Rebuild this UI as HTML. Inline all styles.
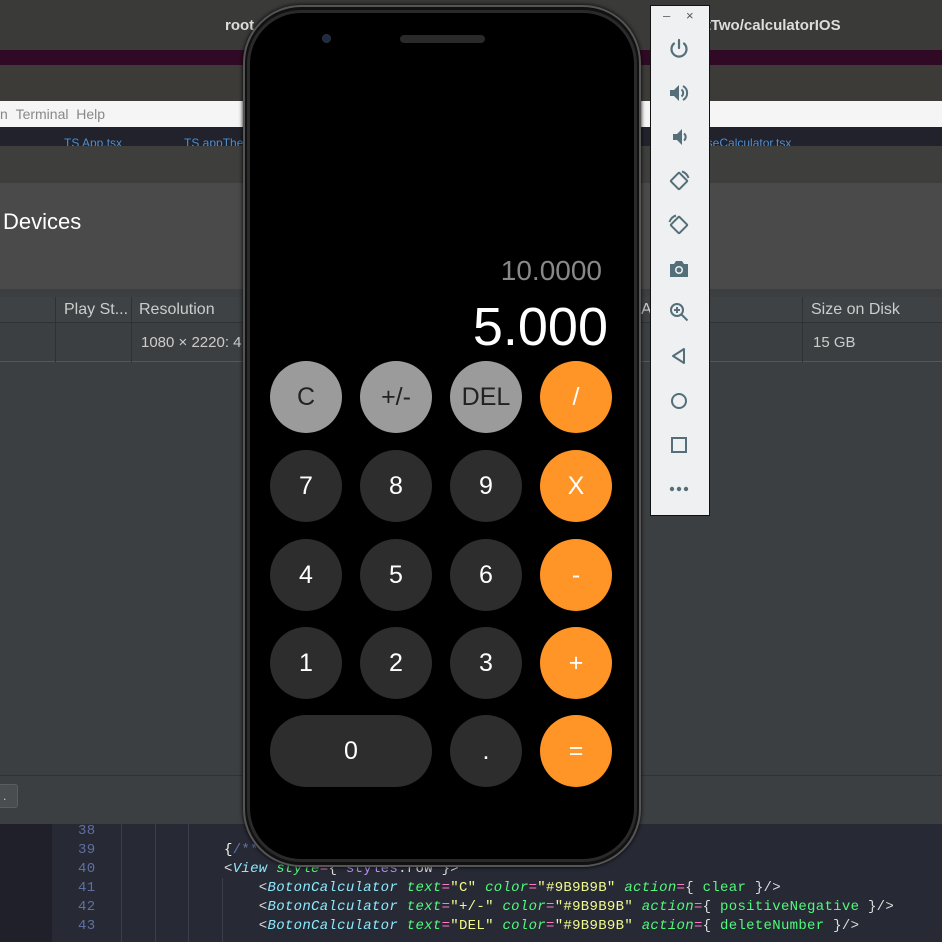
<!DOCTYPE html>
<html><head><meta charset="utf-8"><style>
*{margin:0;padding:0;box-sizing:border-box}
html{width:942px;height:942px;overflow:hidden}
body{width:942px;height:942px;overflow:hidden;background:#3c3f41;position:relative;font-family:"Liberation Sans",sans-serif}
.a{position:absolute}
.btn{position:absolute;width:72px;height:72px;border-radius:36px;display:flex;align-items:center;justify-content:center;font-size:25px;font-family:"Liberation Sans",sans-serif;font-weight:normal;color:#fff}
.g{background:#9b9b9b;color:#222}
.d{background:#2d2d2d}
.o{background:#ff9427}
.code{position:absolute;font-family:"Liberation Mono",monospace;font-size:14px;white-space:pre;line-height:19px;letter-spacing:0.3px}
.ln{color:#5f6f9f}
.ic{position:absolute;left:667px;width:24px;height:24px}
</style></head><body>
<div class="a" style="left:0;top:0;width:942px;height:50px;background:#3a3a38"></div>
<div class="a" style="left:225px;top:17px;color:#ddd;font-weight:bold;font-size:15px">root</div>
<div class="a" style="left:700px;top:17px;color:#ddd;font-weight:bold;font-size:15px">rtTwo/calculatorIOS</div>
<div class="a" style="left:0;top:50px;width:942px;height:15px;background:#300a24"></div>
<div class="a" style="left:0;top:65px;width:942px;height:36px;background:#3c3b37"></div>
<div class="a" style="left:0;top:101px;width:942px;height:26px;background:#f5f5f5"></div>
<div class="a" style="left:0;top:106px;color:#888;font-size:14px">n&nbsp;&nbsp;Terminal&nbsp;&nbsp;Help</div>
<div class="a" style="left:0;top:127px;width:942px;height:19px;background:#21222c"></div>
<div class="a" style="left:64px;top:136px;color:#4d8fd0;font-size:12px">TS App.tsx</div>
<div class="a" style="left:184px;top:136px;color:#4d8fd0;font-size:12px">TS appThe</div>
<div class="a" style="left:700px;top:136px;color:#4d8fd0;font-size:12px">useCalculator.tsx</div>
<div class="a" style="left:0;top:146px;width:942px;height:37px;background:#3e3e3c"></div>
<div class="a" style="left:0;top:183px;width:942px;height:106px;background:#4a4a4a"></div>
<div class="a" style="left:3px;top:209px;color:#fff;font-size:22px">Devices</div>
<div class="a" style="left:0;top:289px;width:942px;height:8px;background:#3c3f41"></div>
<div class="a" style="left:0;top:297px;width:942px;height:26px;background:#3e4244;border-bottom:1px solid #2f3234"></div>
<div class="a" style="left:0;top:323px;width:942px;height:39px;background:#3c3f41;border-bottom:1px solid #55585a"></div>
<div class="a" style="left:55px;top:297px;width:1px;height:65px;background:#2f3234"></div>
<div class="a" style="left:131px;top:297px;width:1px;height:65px;background:#2f3234"></div>
<div class="a" style="left:802px;top:297px;width:1px;height:65px;background:#2f3234"></div>
<div class="a" style="left:64px;top:301px;color:#ccc;font-size:16px">Play St...</div>
<div class="a" style="left:139px;top:301px;color:#ccc;font-size:16px">Resolution</div>
<div class="a" style="left:641px;top:301px;color:#ccc;font-size:16px">A</div>
<div class="a" style="left:811px;top:301px;color:#ccc;font-size:16px">Size on Disk</div>
<div class="a" style="left:141px;top:334px;color:#ccc;font-size:15px">1080 × 2220: 4</div>
<div class="a" style="left:813px;top:334px;color:#ccc;font-size:15px">15 GB</div>
<div class="a" style="left:0;top:775px;width:942px;height:1px;background:#2f3234"></div>
<div class="a" style="left:-4px;top:784px;width:22px;height:24px;background:#4a4d4f;border:1px solid #5a5d5f;border-radius:3px;color:#ccc;font-size:12px;padding:4px 6px">.</div>
<div class="a" style="left:0;top:824px;width:942px;height:118px;background:#272a35;overflow:hidden"></div>
<div class="a" style="left:0;top:824px;width:52px;height:118px;background:#1f2029"></div>
<div class="a" style="left:121px;top:824px;width:1px;height:118px;background:#3a3d4a"></div>
<div class="a" style="left:155px;top:824px;width:1px;height:118px;background:#3a3d4a"></div>
<div class="a" style="left:188px;top:824px;width:1px;height:118px;background:#3a3d4a"></div>
<div class="a" style="left:222px;top:878px;width:1px;height:64px;background:#3a3d4a"></div>
<div class="code" style="left:78px;top:822px"><span class="ln">38
39
40
41
42
43</span></div>
<div class="code" style="left:224px;top:841px;color:#ddd"><span style="color:#f8f8f2">{</span><span style="color:#6272a4">/**</span>
<span>&lt;</span><i style="color:#8be9fd">View</i> <i style="color:#50fa7b">style</i><span style="color:#ff79c6">=</span>{ <span style="color:#bd93f9">styles</span>.row }&gt;
    &lt;<i style="color:#8be9fd">BotonCalculator</i> <i style="color:#50fa7b">text</i><span style="color:#ff79c6">=</span><span style="color:#f1fa8c">"C"</span> <i style="color:#50fa7b">color</i><span style="color:#ff79c6">=</span><span style="color:#f1fa8c">"#9B9B9B"</span> <i style="color:#50fa7b">action</i><span style="color:#ff79c6">=</span>{ <span style="color:#50fa7b">clear</span> }/&gt;
    &lt;<i style="color:#8be9fd">BotonCalculator</i> <i style="color:#50fa7b">text</i><span style="color:#ff79c6">=</span><span style="color:#f1fa8c">"+/-"</span> <i style="color:#50fa7b">color</i><span style="color:#ff79c6">=</span><span style="color:#f1fa8c">"#9B9B9B"</span> <i style="color:#50fa7b">action</i><span style="color:#ff79c6">=</span>{ <span style="color:#50fa7b">positiveNegative</span> }/&gt;
    &lt;<i style="color:#8be9fd">BotonCalculator</i> <i style="color:#50fa7b">text</i><span style="color:#ff79c6">=</span><span style="color:#f1fa8c">"DEL"</span> <i style="color:#50fa7b">color</i><span style="color:#ff79c6">=</span><span style="color:#f1fa8c">"#9B9B9B"</span> <i style="color:#50fa7b">action</i><span style="color:#ff79c6">=</span>{ <span style="color:#50fa7b">deleteNumber</span> }/&gt;</div>

<div class="a" style="left:243px;top:5px;width:398px;height:862px;border-radius:58px;background:#111;border:2px solid #555;box-shadow:0 0 4px #000"></div>
<div class="a" style="left:247px;top:10px;width:390px;height:852px;border-radius:54px;background:#000;border:3px solid #2a2a2a"></div>
<div class="a" style="left:255px;top:18px;width:375px;height:834px;border-radius:44px;background:#000"></div>
<div class="a" style="left:322px;top:34px;width:9px;height:9px;border-radius:5px;background:#1e2a4a;border:1px solid #333"></div>
<div class="a" style="left:400px;top:35px;width:85px;height:8px;border-radius:4px;background:#2a2a2a"></div>
<div class="a" style="left:300px;top:255px;width:302px;text-align:right;color:#888;font-size:28px;font-family:'Liberation Sans',sans-serif">10.0000</div>
<div class="a" style="left:300px;top:296px;width:308px;text-align:right;color:#fff;font-size:54px;font-family:'Liberation Sans',sans-serif">5.000</div>

<div class="btn g" style="left:270px;top:361px">C</div>
<div class="btn g" style="left:360px;top:361px">+/-</div>
<div class="btn g" style="left:450px;top:361px">DEL</div>
<div class="btn o" style="left:540px;top:361px">/</div>
<div class="btn d" style="left:270px;top:450px">7</div>
<div class="btn d" style="left:360px;top:450px">8</div>
<div class="btn d" style="left:450px;top:450px">9</div>
<div class="btn o" style="left:540px;top:450px">X</div>
<div class="btn d" style="left:270px;top:539px">4</div>
<div class="btn d" style="left:360px;top:539px">5</div>
<div class="btn d" style="left:450px;top:539px">6</div>
<div class="btn o" style="left:540px;top:539px">-</div>
<div class="btn d" style="left:270px;top:627px">1</div>
<div class="btn d" style="left:360px;top:627px">2</div>
<div class="btn d" style="left:450px;top:627px">3</div>
<div class="btn o" style="left:540px;top:627px">+</div>
<div class="btn d" style="left:270px;top:715px;width:162px">0</div>
<div class="btn d" style="left:450px;top:715px">.</div>
<div class="btn o" style="left:540px;top:715px">=</div>

<div class="a" style="left:650px;top:5px;width:60px;height:511px;background:#eef0f1;border:1px solid #111"></div>
<div class="a" style="left:663px;top:8px;color:#666;font-size:13px">–</div>
<div class="a" style="left:686px;top:8px;color:#555;font-size:13px">×</div>
<svg class="ic" style="top:37px" viewBox="0 0 24 24" fill="none" stroke="#546e7a" stroke-width="2.2" stroke-linecap="round"><path d="M12 3v8"/><path d="M7 6.5a7.5 7.5 0 1 0 10 0"/></svg>
<svg class="ic" style="top:81px" viewBox="0 0 24 24"><path fill="#546e7a" d="M3 9v6h4l5 5V4L7 9z"/><path fill="none" stroke="#546e7a" stroke-width="2" d="M14.5 8.5a4.5 4.5 0 0 1 0 7M16 5a8 8 0 0 1 0 14"/></svg>
<svg class="ic" style="top:125px" viewBox="0 0 24 24"><path fill="#546e7a" d="M6 9v6h4l5 5V4l-5 5z"/><path fill="none" stroke="#546e7a" stroke-width="2" d="M17 8.5a4.5 4.5 0 0 1 0 7"/></svg>
<svg class="ic" style="top:169px" viewBox="0 0 24 24" fill="none" stroke="#546e7a" stroke-width="2"><rect x="6" y="6" width="12" height="12" transform="rotate(-45 12 12)" rx="1"/><path d="M15 2.5a10 10 0 0 1 6.5 6.5"/></svg>
<svg class="ic" style="top:213px" viewBox="0 0 24 24" fill="none" stroke="#546e7a" stroke-width="2"><rect x="6" y="6" width="12" height="12" transform="rotate(45 12 12)" rx="1"/><path d="M9 2.5a10 10 0 0 0-6.5 6.5"/></svg>
<svg class="ic" style="top:257px" viewBox="0 0 24 24"><path fill="#546e7a" d="M3 7h4l2-3h6l2 3h4v13H3z"/><circle cx="12" cy="13" r="4" fill="#eef0f1"/><circle cx="12" cy="13" r="2.5" fill="#546e7a"/></svg>
<svg class="ic" style="top:300px" viewBox="0 0 24 24" fill="none" stroke="#546e7a" stroke-width="2"><circle cx="10" cy="10" r="6"/><path d="M14.5 14.5l6 6M10 7v6M7 10h6"/></svg>
<svg class="ic" style="top:344px" viewBox="0 0 24 24" fill="none" stroke="#546e7a" stroke-width="2" stroke-linejoin="round"><path d="M17 5v14L6 12z"/></svg>
<svg class="ic" style="top:389px" viewBox="0 0 24 24" fill="none" stroke="#546e7a" stroke-width="2"><circle cx="12" cy="12" r="7"/></svg>
<svg class="ic" style="top:433px" viewBox="0 0 24 24" fill="none" stroke="#546e7a" stroke-width="2"><rect x="5" y="5" width="14" height="14"/></svg>
<svg class="ic" style="top:477px" viewBox="0 0 24 24" fill="#546e7a"><circle cx="5" cy="12" r="2.2"/><circle cx="12" cy="12" r="2.2"/><circle cx="19" cy="12" r="2.2"/></svg>
</body></html>
